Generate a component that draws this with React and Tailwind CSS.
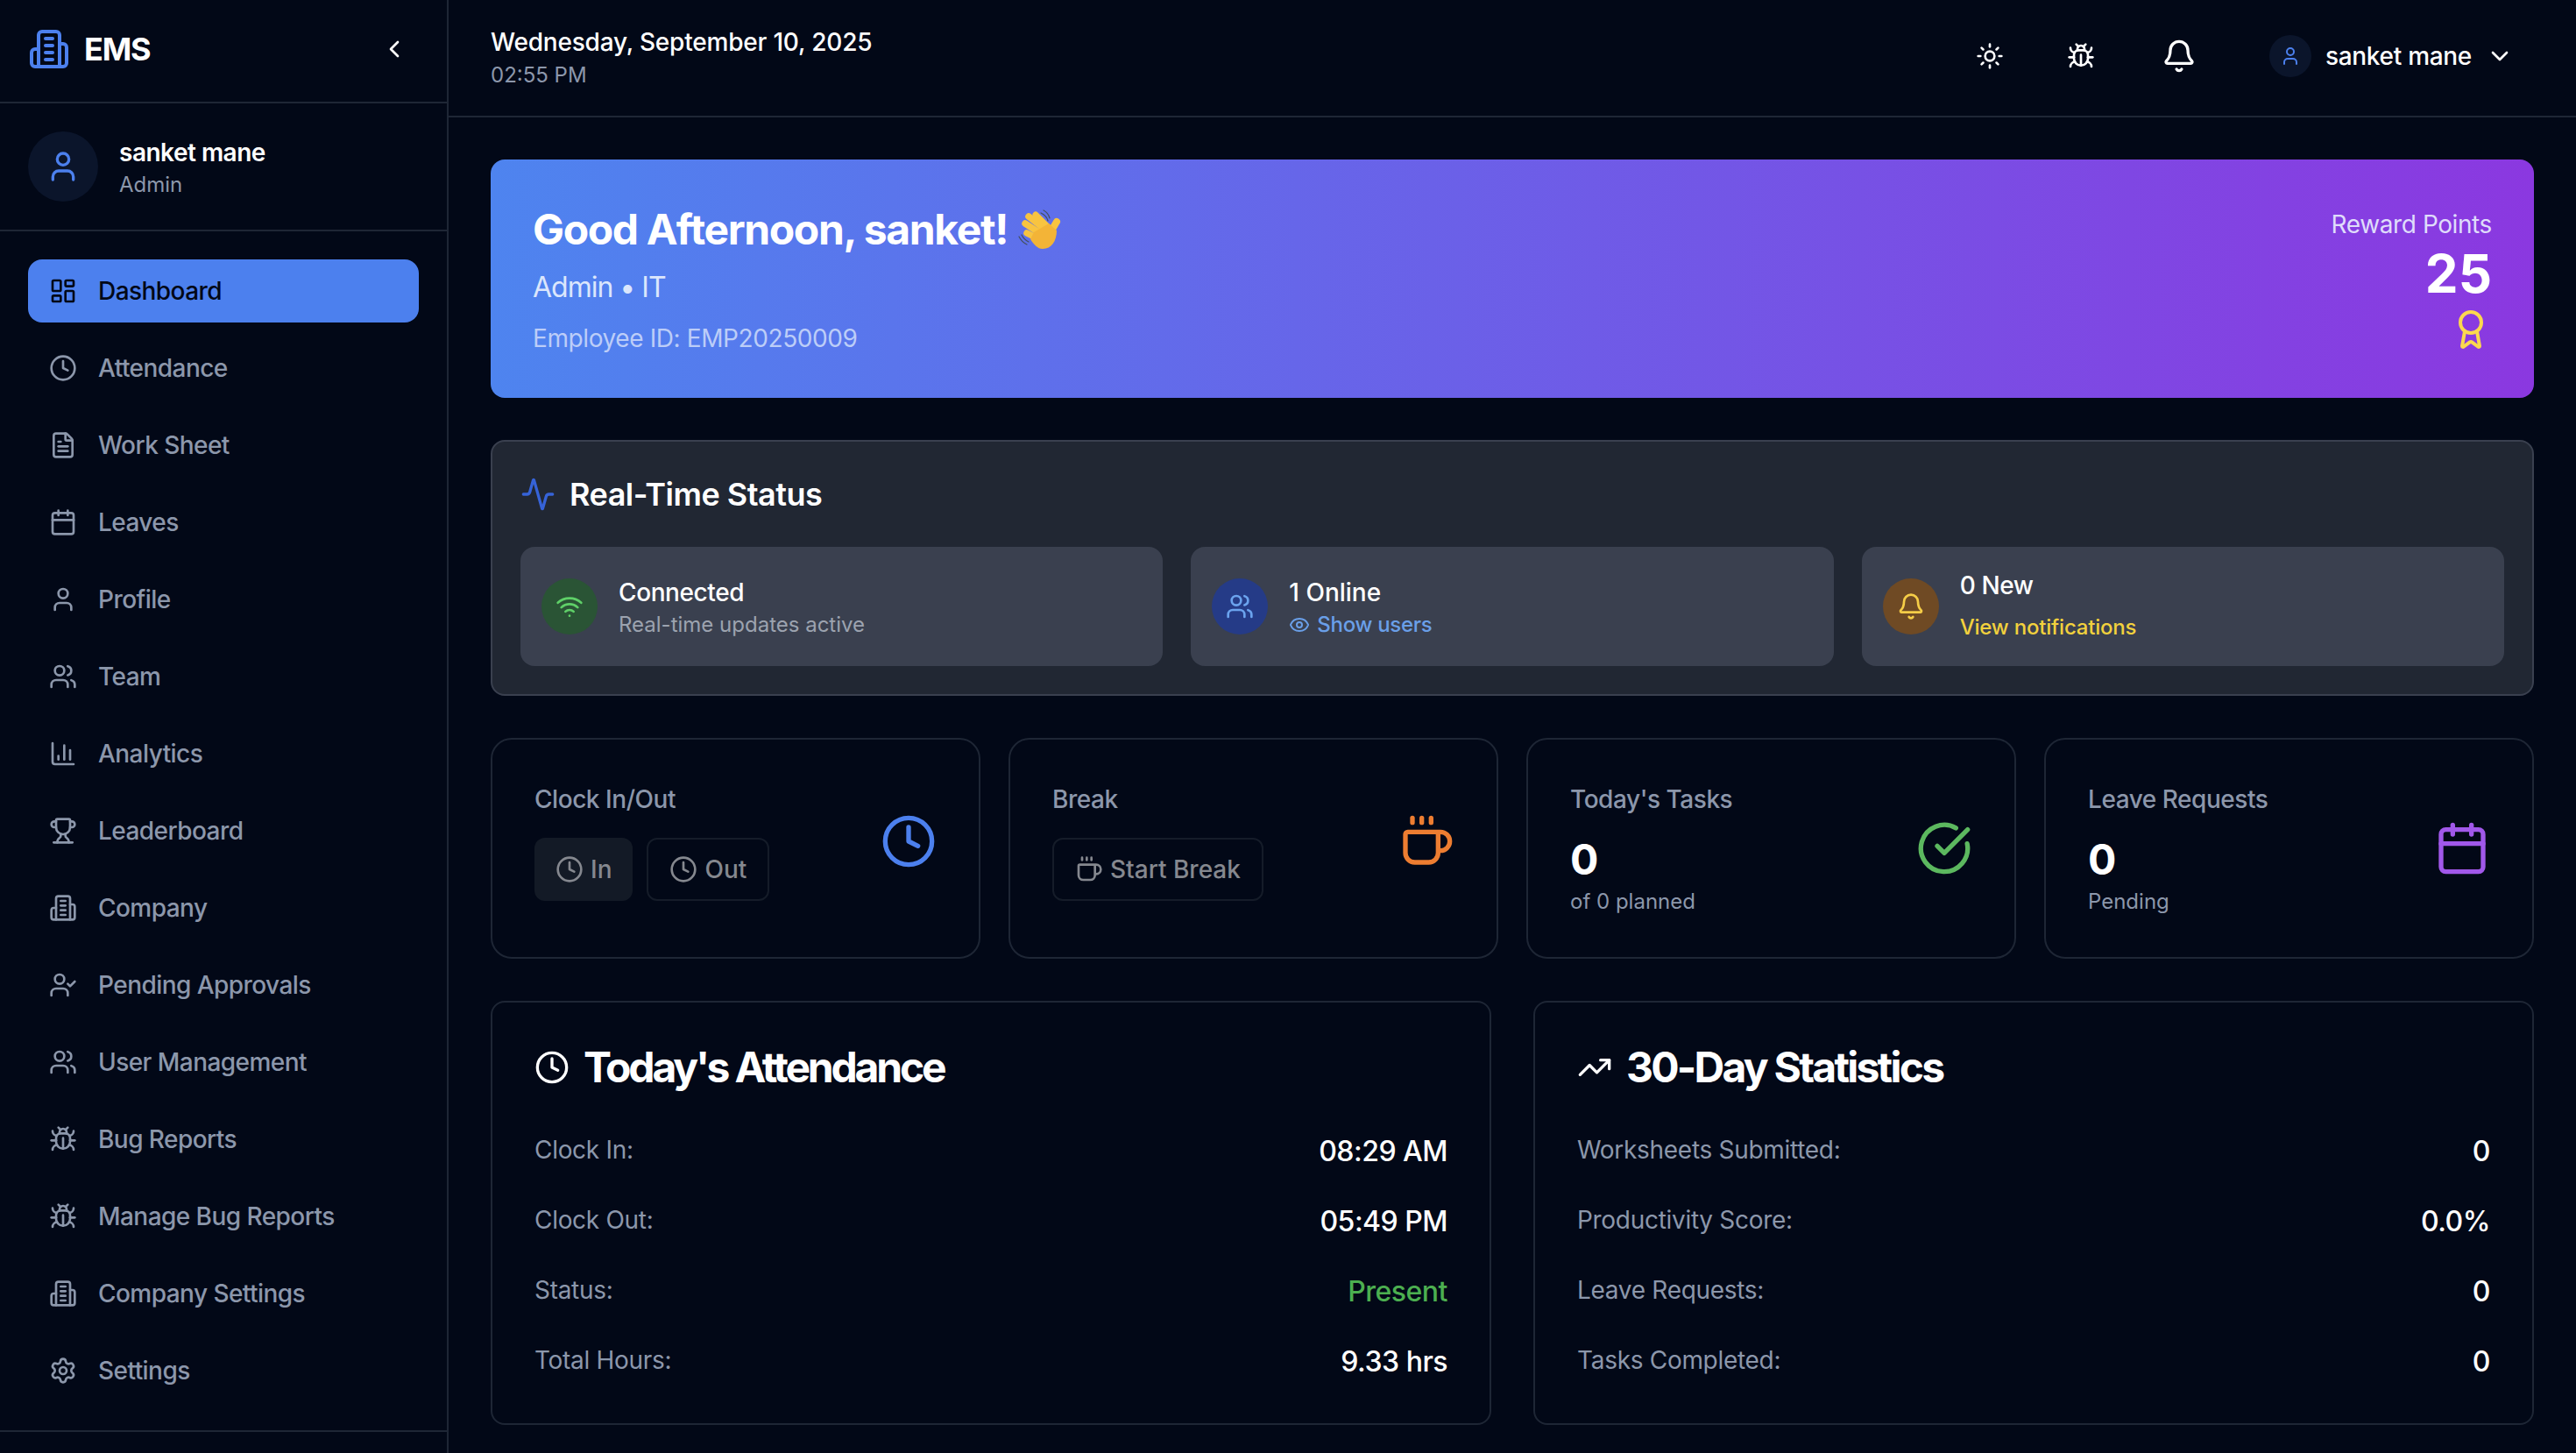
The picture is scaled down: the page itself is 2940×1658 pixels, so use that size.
import React from 'react';
import {
    Award, Activity, BarChart3, Bell, Bug, Calendar, ChevronDown, ChevronLeft,
    CircleCheckBig, Clock, Coffee, Eye, FileText, LayoutDashboard, Settings, Sun, TrendingUp, Trophy,
    User, UserCheck, Users, Wifi,
} from 'lucide-react';

// older lucide building shape, the installed one has different windows
function Building({ size = 24, className = '' }) {
    return (
        <svg width={size} height={size} viewBox="0 0 24 24" fill="none" stroke="currentColor" strokeWidth="2" strokeLinecap="round" strokeLinejoin="round" className={className}>
            <path d="M6 22V4a2 2 0 0 1 2-2h8a2 2 0 0 1 2 2v18Z" />
            <path d="M6 12H4a2 2 0 0 0-2 2v6a2 2 0 0 0 2 2h2" />
            <path d="M18 9h2a2 2 0 0 1 2 2v9a2 2 0 0 1-2 2h-2" />
            <path d="M10 6h4" />
            <path d="M10 10h4" />
            <path d="M10 14h4" />
            <path d="M10 18h4" />
        </svg>
    );
}

const navItems = [
    { icon: LayoutDashboard, label: 'Dashboard', active: true },
    { icon: Clock, label: 'Attendance' },
    { icon: FileText, label: 'Work Sheet' },
    { icon: Calendar, label: 'Leaves' },
    { icon: User, label: 'Profile' },
    { icon: Users, label: 'Team' },
    { icon: BarChart3, label: 'Analytics' },
    { icon: Trophy, label: 'Leaderboard' },
    { icon: Building, label: 'Company' },
    { icon: UserCheck, label: 'Pending Approvals' },
    { icon: Users, label: 'User Management' },
    { icon: Bug, label: 'Bug Reports' },
    { icon: Bug, label: 'Manage Bug Reports' },
    { icon: Building, label: 'Company Settings' },
    { icon: Settings, label: 'Settings' },
];

const attendanceRows = [
    { label: 'Clock In:', value: '08:29 AM' },
    { label: 'Clock Out:', value: '05:49 PM' },
    { label: 'Status:', value: 'Present', color: 'text-[#4caf50]' },
    { label: 'Total Hours:', value: '9.33 hrs' },
];

const statRows = [
    { label: 'Worksheets Submitted:', value: '0' },
    { label: 'Productivity Score:', value: '0.0%' },
    { label: 'Leave Requests:', value: '0' },
    { label: 'Tasks Completed:', value: '0' },
];

// no emoji font in the sandbox, so the wave is drawn
function WaveHand() {
    return (
        <svg width="50" height="47" viewBox="12 8 50 47" className="ml-3 shrink-0" fill="none">
            <g stroke="#f8c440" strokeLinecap="round">
                <path d="M22 35 L38 43" strokeWidth="7.5" />
                <path d="M20 24 L40 37" strokeWidth="7.5" />
                <path d="M24 16 L43 31" strokeWidth="7.5" />
                <path d="M32 14 L47 29" strokeWidth="7" />
                <path d="M46 39 L56 22" strokeWidth="8" />
            </g>
            <path d="M30 34 L47 24 L56 32 C56 44 50 53 40 53 C34 53 30 48 26 42 Z" fill="#f3b437" />
            <path d="M13 39 C15 43 18 46 22 48 M16 37 C18 41 20 43 24 45" stroke="#44505f" strokeWidth="1.2" strokeLinecap="round" />
            <path d="M38 12 C42 14 45 17 46 21 M41 9 C45 11 47 14 48 18" stroke="#44505f" strokeWidth="1.2" strokeLinecap="round" />
        </svg>
    );
}

function Sidebar() {
    return (
        <aside className="w-[512px] shrink-0 border-r-2 border-[#1e2635] flex flex-col">
            <div className="flex items-center justify-between pl-8 pr-[44px] pt-8 pb-9 border-b-2 border-[#1e2635]">
                <div className="flex items-center gap-4">
                    <Building size={48} className="text-[#4c80ee]" />
                    <span className="text-[36px] leading-[48px] font-bold tracking-[-1.2px] text-white">EMS</span>
                </div>
                <ChevronLeft size={32} className="text-white" />
            </div>

            <div className="flex items-center gap-6 px-8 py-8 border-b-2 border-[#1e2635]">
                <div className="w-20 h-20 rounded-full bg-[#0b152b] flex items-center justify-center">
                    <User size={40} className="text-[#4c80ee]" />
                </div>
                <div>
                    <div className="text-[28px] leading-[40px] font-semibold tracking-[-0.5px] text-white">sanket mane</div>
                    <div className="text-[24px] leading-[32px] pt-px text-[#8c97ab]">Admin</div>
                </div>
            </div>

            <nav className="flex flex-col gap-4 p-8 border-b-2 border-[#1e2635]">
                {navItems.map((item) => (
                    <div
                        key={item.label}
                        className={`h-[72px] px-6 rounded-2xl flex items-center gap-6 text-[28px] font-medium tracking-[-0.55px] ${item.active ? 'bg-[#4c80ee] text-[#020817]' : 'text-[#8c97ab]'}`}
                    >
                        <item.icon size={32} />
                        <span>{item.label}</span>
                    </div>
                ))}
            </nav>
        </aside>
    );
}

function TopBar() {
    return (
        <header className="h-[134px] pl-12 pr-[47px] pt-7 border-b-2 border-[#1e2635] flex items-start justify-between">
            <div>
                <div className="text-[28px] leading-[40px] font-medium tracking-[-0.2px] text-white">Wednesday, September 10, 2025</div>
                <div className="text-[24px] leading-[32px] pt-[2px] text-[#8c97ab]">02:55 PM</div>
            </div>
            <div className="flex items-center h-[72px] text-white">
                <div className="p-4"><Sun size={32} /></div>
                <div className="p-4 ml-10"><Bug size={32} /></div>
                <div className="p-4 ml-11"><Bell size={40} /></div>
                <div className="flex items-center gap-4 px-6 ml-[43px]">
                    <div className="w-12 h-12 rounded-full bg-[#0b152b] flex items-center justify-center">
                        <User size={24} className="text-[#4c80ee]" />
                    </div>
                    <span className="text-[28px] font-medium tracking-[-0.3px]">sanket mane</span>
                    <ChevronDown size={32} />
                </div>
            </div>
        </header>
    );
}

function WelcomeBanner() {
    return (
        <section className="h-[272px] rounded-2xl px-12 py-12 bg-linear-to-r/srgb from-[#4e84ef] to-[#8b38e0] flex items-center justify-between">
            <div>
                <div className="flex items-center text-[48px] leading-[64px] font-bold tracking-[-1.35px] text-white">
                    Good Afternoon, sanket!
                    <WaveHand />
                </div>
                <div className="mt-[10px] text-[32px] leading-[48px] tracking-[-1px] text-[#dbe6fc]">Admin • IT</div>
                <div className="mt-[14px] text-[28px] leading-[40px] tracking-[-0.4px] text-[#bccdf8]">Employee ID: EMP20250009</div>
            </div>
            <div className="flex flex-col items-end">
                <div className="text-[28px] leading-[40px] tracking-[-0.4px] text-[#dfdcfb]">Reward Points</div>
                <div className="text-[60px] leading-[72px] font-bold text-white">25</div>
                <Award size={48} className="mt-1 text-[#fbd84f]" />
            </div>
        </section>
    );
}

function StatusTile({ iconBg, icon, children }) {
    return (
        <div className="rounded-2xl bg-[#3a404f] p-6 flex items-center gap-6">
            <div className={`w-16 h-16 rounded-full flex items-center justify-center shrink-0 ${iconBg}`}>{icon}</div>
            <div>{children}</div>
        </div>
    );
}

function RealTimeStatus() {
    return (
        <section className="mt-12 rounded-2xl bg-[#212733] border-2 border-[#3a404f] p-8">
            <div className="flex items-center gap-4 h-14 mb-8">
                <Activity size={40} className="text-[#3663d8]" />
                <h3 className="text-[36px] font-semibold tracking-[-0.5px] text-white">Real-Time Status</h3>
            </div>
            <div className="grid grid-cols-3 gap-8">
                <StatusTile iconBg="bg-[#2a5435]" icon={<Wifi size={32} className="text-[#5fd068]" />}>
                    <div className="text-[28px] leading-[40px] font-medium tracking-[-0.4px] text-white">Connected</div>
                    <div className="text-[24px] leading-[32px] pt-px text-[#9ca3af]">Real-time updates active</div>
                </StatusTile>
                <StatusTile iconBg="bg-[#253b87]" icon={<Users size={32} className="text-[#6ba3ee]" />}>
                    <div className="text-[28px] leading-[40px] font-medium text-white">1 Online</div>
                    <div className="flex items-center gap-2 text-[24px] leading-[32px] pt-px font-medium tracking-[-0.3px] text-[#6a9fe8]">
                        <Eye size={24} />
                        Show users
                    </div>
                </StatusTile>
                <StatusTile iconBg="bg-[#6f4a24]" icon={<Bell size={32} className="text-[#f5cd47]" />}>
                    <div className="text-[28px] leading-[40px] font-medium tracking-[-0.4px] text-white">0 New</div>
                    <div className="mt-[7px] h-[41px] pt-px flex items-center text-[24px] font-medium tracking-[-0.2px] text-[#f2d13d]">View notifications</div>
                </StatusTile>
            </div>
        </section>
    );
}

function ActionButton({ icon: Icon, label, filled }) {
    return (
        <div className={`h-[72px] px-6 rounded-xl flex items-center gap-2 text-[28px] font-medium text-[#85888f] ${filled ? 'bg-[#131a26]' : 'border-2 border-[#151c29]'}`}>
            <Icon size={32} />
            {label}
        </div>
    );
}

function StatCard({ label, icon, children }) {
    return (
        <div className="rounded-3xl border-2 border-[#1e2635] p-12 h-[252px]">
            <div className="flex items-center justify-between">
                <div>
                    <div className="text-[28px] leading-[40px] font-medium tracking-[-0.45px] text-[#8c97ab]">{label}</div>
                    {children}
                </div>
                {icon}
            </div>
        </div>
    );
}

function StatValue({ value, sub }) {
    return (
        <>
            <div className="mt-4 pt-px text-[48px] leading-[64px] font-bold text-white">{value}</div>
            <div className="text-[24px] leading-[31px] text-[#8c97ab]">{sub}</div>
        </>
    );
}

function StatCards() {
    return (
        <section className="mt-12 grid grid-cols-4 gap-8">
            <StatCard label="Clock In/Out" icon={<Clock size={64} className="text-[#4c80ee]" />}>
                <div className="mt-6 flex gap-4">
                    <ActionButton icon={Clock} label="In" filled />
                    <ActionButton icon={Clock} label="Out" />
                </div>
            </StatCard>
            <StatCard label="Break" icon={<Coffee size={64} className="text-[#ed7d31]" />}>
                <div className="mt-6 flex">
                    <ActionButton icon={Coffee} label="Start Break" />
                </div>
            </StatCard>
            <StatCard label="Today's Tasks" icon={<CircleCheckBig size={64} className="text-[#5cb85f]" />}>
                <StatValue value="0" sub="of 0 planned" />
            </StatCard>
            <StatCard label="Leave Requests" icon={<Calendar size={64} className="text-[#a158ea]" />}>
                <StatValue value="0" sub="Pending" />
            </StatCard>
        </section>
    );
}

function DetailCard({ icon: Icon, title, titleClass, rows }) {
    return (
        <div className="rounded-2xl border-2 border-[#1e2635] p-12">
            <div className="flex items-center gap-4 h-[52px] mb-11 text-white">
                <Icon size={40} />
                <h3 className={`text-[48px] font-bold ${titleClass}`}>{title}</h3>
            </div>
            <div className="flex flex-col gap-8">
                {rows.map((row) => (
                    <div key={row.label} className="flex items-center justify-between h-12">
                        <span className="text-[28px] tracking-[-0.3px] text-[#8c97ab]">{row.label}</span>
                        <span className={`text-[32px] pt-[3px] font-medium tracking-[-0.5px] ${row.color || 'text-white'}`}>{row.value}</span>
                    </div>
                ))}
            </div>
        </div>
    );
}

export default function App() {
    return (
        <div className="h-[1658px] overflow-hidden flex bg-[#020817] [font-family:Inter,sans-serif]">
            <Sidebar />
            <main className="flex-1 min-w-0">
                <TopBar />
                <div className="p-12">
                    <WelcomeBanner />
                    <RealTimeStatus />
                    <StatCards />
                    <section className="mt-12 grid grid-cols-2 gap-12">
                        <DetailCard icon={Clock} title="Today's Attendance" titleClass="tracking-[-3.2px]" rows={attendanceRows} />
                        <DetailCard icon={TrendingUp} title="30-Day Statistics" titleClass="tracking-[-2.75px]" rows={statRows} />
                    </section>
                </div>
            </main>
        </div>
    );
}
